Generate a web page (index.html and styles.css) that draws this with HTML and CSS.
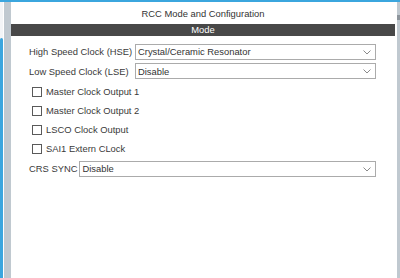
FILE: index.html
```html
<!DOCTYPE html>
<html lang="en">
<head>
    <meta charset="UTF-8">
    <title>RCC Mode and Configuration</title>
    <link rel="stylesheet" href="styles.css">
</head>
<body>
    <div class="topline"></div>
    <div class="frame">
        <div class="dock"><div class="dock-tab"></div></div>
        <div class="splitter"></div>
        <div class="panel">
            <div class="panel-title">RCC Mode and Configuration</div>
            <div class="section-bar">Mode</div>
            <div class="form">
                <div class="row select-row">
                    <label class="label fixed">High Speed Clock (HSE)</label>
                    <div class="select">
                        <span>Crystal/Ceramic Resonator</span>
                        <svg class="chevron" width="8" height="5" viewBox="0 0 8 5"><polyline points="0.5,0.5 4,4 7.5,0.5" fill="none" stroke="#8a8a8a" stroke-width="1"/></svg>
                    </div>
                </div>
                <div class="row select-row">
                    <label class="label fixed">Low Speed Clock (LSE)</label>
                    <div class="select">
                        <span>Disable</span>
                        <svg class="chevron" width="8" height="5" viewBox="0 0 8 5"><polyline points="0.5,0.5 4,4 7.5,0.5" fill="none" stroke="#8a8a8a" stroke-width="1"/></svg>
                    </div>
                </div>
                <div class="row check-row"><span class="box"></span><span>Master Clock Output 1</span></div>
                <div class="row check-row"><span class="box"></span><span>Master Clock Output 2</span></div>
                <div class="row check-row"><span class="box"></span><span>LSCO Clock Output</span></div>
                <div class="row check-row"><span class="box"></span><span>SAI1 Extern CLock</span></div>
                <div class="row select-row">
                    <label class="label">CRS SYNC</label>
                    <div class="select">
                        <span>Disable</span>
                        <svg class="chevron" width="8" height="5" viewBox="0 0 8 5"><polyline points="0.5,0.5 4,4 7.5,0.5" fill="none" stroke="#8a8a8a" stroke-width="1"/></svg>
                    </div>
                </div>
            </div>
        </div>
        <div class="scroll"><div class="scroll-track"><div class="scroll-arrow"></div></div></div>
    </div>
</body>
</html>
```

FILE: styles.css
```css
body {
    margin: 0;
    padding: 0;
    font-family: "Liberation Sans", Arial, sans-serif;
    font-size: 9.4px;
    color: #3a3a3a;
    background-color: #fff;
    width: 400px;
    height: 278px;
    overflow: hidden;
}
.topline {
    height: 2px;
    background-color: #3ba6de;
}
.frame {
    display: flex;
    height: 276px;
}
.dock {
    width: 3px;
    margin-right: 1px;
    padding-top: 36px;
    background-color: #f3f5f7;
}
.dock-tab {
    height: 100%;
    background-color: #3ba6de;
    border-radius: 2px 2px 0 0;
}
.splitter {
    width: 7px;
    background-color: #c0c9d0;
}
.panel {
    flex: 1;
    display: flex;
    flex-direction: column;
}
.panel-title {
    height: 22px;
    line-height: 24px;
    text-align: center;
    font-size: 9.4px;
    color: #333;
}
.section-bar {
    height: 12px;
    line-height: 12px;
    background-color: #484848;
    color: #fff;
    text-align: center;
}
.form {
    padding: 6px 19px 0 18px;
}
.row {
    display: flex;
    align-items: center;
}
.select-row {
    height: 19.5px;
}
.check-row {
    height: 19px;
    padding-left: 3px;
}
.check-row:first-of-type,
.select-row + .check-row {
    margin-top: 1px;
}
.check-row + .select-row {
    margin-top: 1px;
}
.label {
    white-space: nowrap;
    margin-right: 2px;
    color: #3a3a3a;
}
.fixed {
    width: 104px;
}
.select {
    flex: 1;
    height: 14px;
    border: 1px solid #ababab;
    background-color: #fff;
    display: flex;
    align-items: center;
    justify-content: space-between;
    padding: 0 4px 0 2px;
    color: #333;
}
.chevron {
    display: block;
    margin-top: 1px;
}
.box {
    width: 8px;
    height: 8px;
    border: 1px solid #5a5a5a;
    background-color: #fff;
    margin-right: 4px;
}
.scroll {
    width: 5px;
    padding-left: 2px;
    box-sizing: border-box;
}
.scroll-track {
    height: 100%;
    background-color: #c0c9d0;
    padding-top: 13px;
}
.scroll-arrow {
    height: 5px;
    background-color: #8d959c;
}
```
